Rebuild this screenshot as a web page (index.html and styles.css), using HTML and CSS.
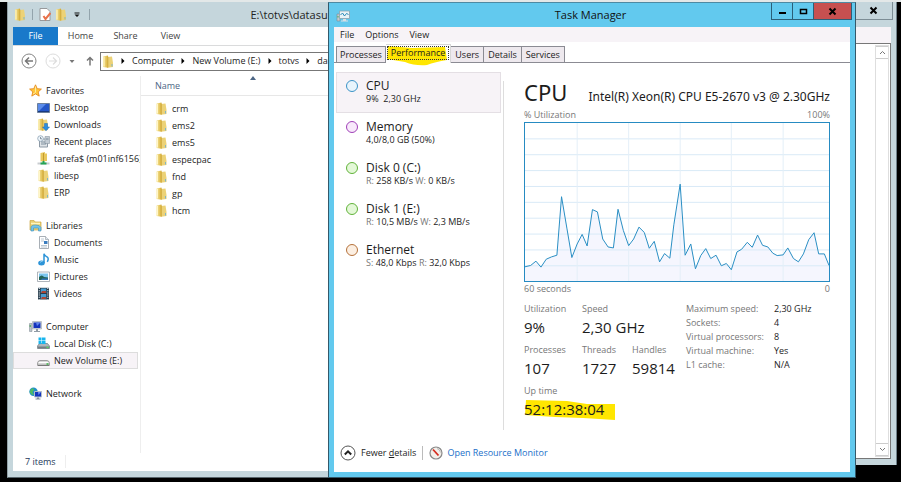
FILE: index.html
```
<!DOCTYPE html>
<html lang="en">
<head>
<meta charset="utf-8">
<title>Task Manager</title>
<link rel="stylesheet" href="styles.css">
</head>
<body>
<svg class="defs" aria-hidden="true">
  <defs>
    <linearGradient id="gold" x1="0" x2="1"><stop offset="0" stop-color="#f7e69a"/><stop offset="1" stop-color="#d9b23c"/></linearGradient>
    <symbol id="folder" viewBox="0 0 12 13">
      <path d="M1 1.500 6 .5V12.700L1 12z" fill="url(#gold)"/>
      <path d="M5.500 2 10 1.500 11 8V12L5.500 12.700z" fill="#ecd277"/>
      <path d="M5.800 1.500V12.500" stroke="#c9a02f" stroke-width=".8"/>
      <path d="M2 2v9.500" stroke="#fff6c8" stroke-width="1"/>
      <path d="M10 9v2.500" stroke="#7fb5c9" stroke-width="1"/>
    </symbol>
    <symbol id="star" viewBox="0 0 13 13"><path d="M6.500.8 8.200 4.700l4.200.4-3.200 2.800 1 4.200-3.700-2.200-3.700 2.200 1-4.200L.6 5.100l4.200-.4z" fill="#ffc63a" stroke="#e58a1f" stroke-width=".9"/><path d="M6.500 2.500v6l-2.500 1.500" fill="none" stroke="#ffeb9a"/></symbol>
    <symbol id="desktop" viewBox="0 0 13 13"><path d="M.5 2.500h12v9H.5z" fill="#2456c8" stroke="#6b7f9b"/><path d="M1 3h8L2 10H1z" fill="#5b8cea"/><path d="M1 10.500h11" stroke="#193a80"/></symbol>
    <symbol id="downloads" viewBox="0 0 13 13"><use href="#folder" width="12" height="13"/><path d="M7.500 5.500h3v3.500h2L9 12.800 5.500 9h2z" fill="#2a8de0" stroke="#1a68b5" stroke-width=".5"/></symbol>
    <symbol id="recent" viewBox="0 0 13 13"><path d="M2.500 4h8v8h-8z" fill="#dfe4e8" stroke="#8c99a5"/><path d="M8 1.500h4.500v7H8z" fill="#c3ccd4" stroke="#8b97a3" stroke-width=".6"/><circle cx="3.500" cy="3.500" r="2.800" fill="#eef5fa" stroke="#8ea3b5" stroke-width=".8"/><path d="M3.500 2v1.800H5M4 7h4M4 9h5M9 4h2.500" stroke="#66788a" stroke-width=".8" fill="none"/></symbol>
    <symbol id="share" viewBox="0 0 13 13"><path d="M3.500 1 8 0v1.500h2V9l-6.500.5z" fill="#e9c85c"/><path d="M6.500 1v8" stroke="#c29a2d"/><path d="M.5 11.500h12" stroke="#c8ccd0" stroke-width="2"/><path d="M6.500 9v2M3.500 11.500h6" stroke="#25a454" stroke-width="2"/></symbol>
    <symbol id="libraries" viewBox="0 0 13 13"><path d="M1 1.500h4l1 1.500h6v8H1z" fill="#ead073" stroke="#cba643" stroke-width=".7"/><path d="M2 4.500h9" stroke="#fff5bd" stroke-width="1.500"/><path d="M2 12V8.500Q2 6 6.500 6T12 8.500V12H9.500V9h-5v3z" fill="#73c3e9" stroke="#3d91bd" stroke-width=".6"/></symbol>
    <symbol id="document" viewBox="0 0 13 13"><path d="M2.500.5h6l3 3v9h-9z" fill="#fff" stroke="#929ba3" stroke-width=".8"/><path d="M4 3h3M4 5h3M4 9.500h6M4 11h6" stroke="#a9bac8" stroke-width=".8"/><path d="M7 5h3.500v3H7z" fill="#3a7dbf"/><path d="M8.500.5v3h3" fill="#dfe7ed" stroke="#929ba3" stroke-width=".6"/></symbol>
    <symbol id="music" viewBox="0 0 13 13"><ellipse cx="4.500" cy="10" rx="3.300" ry="2.500" fill="#2d94d8"/><path d="M7 10V.8q1 2.500 3.500 3.500 1.500 1.500-.2 4.500" fill="none" stroke="#2d94d8" stroke-width="1.500"/><path d="M3 9.500q1-1.500 2.500-1" stroke="#a4ddfa" fill="none" stroke-width=".8"/></symbol>
    <symbol id="picture" viewBox="0 0 13 13"><path d="M.5 2h12v9.500H.5z" fill="#fff" stroke="#9aa2a9" stroke-width=".8"/><path d="M2 3.500h9V10H2z" fill="#7bc5ee"/><path d="M2 7q3-3 5 0l4 .5V10H2z" fill="#226457"/><path d="M5 8.500h6V10H4z" fill="#3475b8"/></symbol>
    <symbol id="video" viewBox="0 0 13 13"><path d="M1 .8h11v11.700H1z" fill="#273c4b"/><path d="M3.800 1.500h5.500v4.500H3.800zM3.800 7h5.500v5H3.800z" fill="#469bd0"/><path d="M5 4h4v2H4zM5 10h4v2H4z" fill="#a94635"/><path d="M2.300 1v11.500M10.800 1v11.500" stroke="#dbe4ea" stroke-width="1.200" stroke-dasharray="1 1.200"/></symbol>
    <symbol id="computer" viewBox="0 0 13 13"><path d="M.5 3.500h2.500v8H.5z" fill="#bcc4ca" stroke="#79858e" stroke-width=".5"/><path d="M1.200 5v2" stroke="#3aac45"/><path d="M3.500 1.500h9V9h-9z" fill="#d1d7dc" stroke="#939da5" stroke-width=".5"/><path d="M4.500 2.500h7V8h-7z" fill="#1534bd"/><path d="M7 2.500h4.500L8 6z" fill="#6184e9"/><path d="M7 9h2v2h2v1H5v-1h2z" fill="#929ca6"/></symbol>
    <symbol id="disk" viewBox="0 0 13 13"><path d="M.5 9 2.500 6.500h8l2 2.500v2.500H.5z" fill="#aeb5bb" stroke="#6b747b" stroke-width=".7"/><path d="M1 9.500h11v1.800H1z" fill="#747d84"/><path d="M9.500 10.300h2" stroke="#50e655" stroke-width="1.200"/></symbol>
    <symbol id="windisk" viewBox="0 0 13 13"><use href="#disk" width="13" height="13"/><path d="M1.500.5h3v3h-3zM5 .5h3.500v3H5zM1.500 4h3v3h-3zM5 4h3.500v3H5z" fill="#18b5ee"/></symbol>
    <symbol id="volume" viewBox="0 0 13 13"><path d="M.6 9Q1 6.500 3 6.500h7q2 0 2.400 2.500v2.500H.6z" fill="#d8d8d8" stroke="#7c7c7c" stroke-width=".7"/><path d="M1.500 8.500h10" stroke="#fff"/><path d="M1 11.300h11" stroke="#707070"/><path d="M9.500 10h2" stroke="#3bb347" stroke-width="1.500"/></symbol>
    <symbol id="network" viewBox="0 0 13 13"><circle cx="4.500" cy="4.800" r="4.200" fill="#218fca"/><path d="M2 2q3-2 3 1L3.500 5 5 8 2.500 7.500.5 5z" fill="#4ebc62"/><path d="M5.500 4.500h7V10h-7z" fill="#1535bd" stroke="#b3bdc8"/><path d="M9 5h3L9.500 8z" fill="#6c8def"/><path d="M8 10.500h2v1h1.500v1h-5v-1H8z" fill="#828f9a"/></symbol>
  </defs>
</svg>

<main class="screen">
  <section class="win back-win" aria-label="Background window">
    <header class="bar"><button class="cap cap-plain" aria-label="Close window"><svg viewBox="0 0 9 9"><path d="M1.500 1.500l6 6M7.500 1.500l-6 6"/></svg></button></header>
    <div class="back-menu"></div>
    <div class="back-body">
      <div class="scroll">
        <button aria-label="Scroll up"><svg viewBox="0 0 7 5"><path d="M1 4l2.500-2.500L6 4"/></svg></button>
        <button aria-label="Scroll down"><svg viewBox="0 0 7 5"><path d="M1 1l2.500 2.500L6 1"/></svg></button>
      </div>
    </div>
  </section>

  <section class="win explorer" aria-label="File Explorer">
    <header class="bar">
      <svg class="i"><use href="#folder"/></svg><span class="rule"></span>
      <svg class="i" viewBox="0 0 12 13"><path d="M1 .5h7l3 3v9H1z" fill="#fff" stroke="#97999b"/><path d="M4.500 8l2 3 5-6" fill="none" stroke="#e8714a" stroke-width="2"/></svg>
      <svg class="i"><use href="#folder"/></svg>
      <svg class="tiny" viewBox="0 0 6 6"><path d="M.5.500h5v1h-5zM.5 2.500h5L3 5z" fill="#111"/></svg><span class="rule"></span>
      <h1 class="path-title">E:\totvs\datasul</h1>
    </header>
    <div class="client">
      <nav class="ribbon"><button class="file">File</button><button>Home</button><button>Share</button><button>View</button></nav>
      <div class="address">
        <button class="icon-btn" aria-label="Back"><svg viewBox="0 0 16 16"><circle cx="8" cy="8" r="7" fill="#fff" stroke="#858585"/><path d="M12 8H4.500M8 4.500 4.500 8 8 11.500" fill="none" stroke="#777" stroke-width="1.500"/></svg></button>
        <button class="icon-btn fwd" aria-label="Forward"><svg viewBox="0 0 16 16"><circle cx="8" cy="8" r="7" fill="#fff" stroke="#ddd"/><path d="M4 8h7.500M8 4.500 11.500 8 8 11.500" fill="none" stroke="#ddd" stroke-width="1.200"/></svg></button>
        <svg class="tiny" viewBox="0 0 6 6"><path d="M.5 2h5L3 5z" fill="#777"/></svg>
        <svg class="up" viewBox="0 0 8 10"><path d="M4 9.500V1.500M1 4.500l3-3 3 3" fill="none" stroke="#777" stroke-width="1.500"/></svg>
        <div class="crumbs">
          <svg class="i"><use href="#folder"/></svg>
          <svg class="tri" viewBox="0 0 4 6"><path d="M.5 0 3.500 3l-3 3z"/></svg><span>Computer</span>
          <svg class="tri" viewBox="0 0 4 6"><path d="M.5 0 3.500 3l-3 3z"/></svg><span>New Volume (E:)</span>
          <svg class="tri" viewBox="0 0 4 6"><path d="M.5 0 3.500 3l-3 3z"/></svg><span>totvs</span>
          <svg class="tri" viewBox="0 0 4 6"><path d="M.5 0 3.500 3l-3 3z"/></svg><span>datasul</span>
        </div>
      </div>
      <div class="split">
        <nav class="tree">
          <ul><li class="root"><svg><use href="#star"/></svg>Favorites</li><li><svg><use href="#desktop"/></svg>Desktop</li><li><svg><use href="#downloads"/></svg>Downloads</li><li><svg><use href="#recent"/></svg>Recent places</li><li><svg><use href="#share"/></svg>tarefa$ (m01inf6156)</li><li><svg><use href="#folder"/></svg>libesp</li><li><svg><use href="#folder"/></svg>ERP</li></ul>
          <ul><li class="root"><svg><use href="#libraries"/></svg>Libraries</li><li><svg><use href="#document"/></svg>Documents</li><li><svg><use href="#music"/></svg>Music</li><li><svg><use href="#picture"/></svg>Pictures</li><li><svg><use href="#video"/></svg>Videos</li></ul>
          <ul><li class="root"><svg><use href="#computer"/></svg>Computer</li><li><svg><use href="#windisk"/></svg>Local Disk (C:)</li><li class="on"><svg><use href="#volume"/></svg>New Volume (E:)</li></ul>
          <ul><li class="root"><svg><use href="#network"/></svg>Network</li></ul>
        </nav>
        <div class="files">
          <div class="col-head"><span>Name</span><svg class="sort" viewBox="0 0 6 4"><path d="M3 0l3 4H0z" fill="#4d6685"/></svg></div>
          <ul><li><svg><use href="#folder"/></svg>crm</li><li><svg><use href="#folder"/></svg>ems2</li><li><svg><use href="#folder"/></svg>ems5</li><li><svg><use href="#folder"/></svg>especpac</li><li><svg><use href="#folder"/></svg>fnd</li><li><svg><use href="#folder"/></svg>gp</li><li><svg><use href="#folder"/></svg>hcm</li></ul>
        </div>
      </div>
      <footer class="status"><span>7 items</span></footer>
    </div>
  </section>

  <section class="win taskman" aria-label="Task Manager">
    <header class="bar">
      <svg class="app" viewBox="0 0 14 12"><path d="M1 4h3v7H1z" fill="#c4cbd0" stroke="#7a8b95" stroke-width=".6"/><path d="M3.500 1h10v7.500h-10z" fill="#e9f2f6" stroke="#8aa2ae" stroke-width=".8"/><path d="M4.500 5l2-2 2 3 2-2.500 2 1" fill="none" stroke="#2989b8"/><path d="M7 9h3v1.500h2v1H5v-1h2z" fill="#d9dfe3"/><path d="M2 6v1.500" stroke="#41a851"/></svg>
      <h2>Task Manager</h2>
      <div class="caps">
        <button class="cap" aria-label="Minimize"><svg viewBox="0 0 9 9"><path d="M1 6h7"/></svg></button><button class="cap" aria-label="Maximize"><svg viewBox="0 0 9 9"><path d="M1.500 2.500h6v4h-6z" class="thin"/></svg></button><button class="cap cap-close" aria-label="Close"><svg viewBox="0 0 9 9"><path d="M1.500 1.500l6 6M7.500 1.500l-6 6"/></svg></button>
      </div>
    </header>
    <div class="client">
      <nav class="menu"><button>File</button><button>Options</button><button>View</button></nav>
      <div class="tabs" role="tablist">
        <button role="tab">Processes</button><button role="tab" class="sel" aria-selected="true"><svg class="mark" viewBox="0 0 60 20" preserveAspectRatio="none"><path d="M1 0 25 2 58 1 60 14Q48 16 40 19 28 20 18 16L0 13z"/></svg><span>Performance</span></button><button role="tab">Users</button><button role="tab">Details</button><button role="tab">Services</button>
      </div>
      <div class="perf">
        <ul class="res">
          <li class="cpu on"><i></i><div><b>CPU</b><p>9%&nbsp; 2,30 GHz</p></div></li>
          <li class="mem"><i></i><div><b>Memory</b><p>4,0/8,0 GB (50%)</p></div></li>
          <li class="dsk"><i></i><div><b>Disk 0 (C:)</b><p><em>R:</em> 258 KB/s <em>W:</em> 0 KB/s</p></div></li>
          <li class="dsk"><i></i><div><b>Disk 1 (E:)</b><p><em>R:</em> 10,5 MB/s <em>W:</em> 2,3 MB/s</p></div></li>
          <li class="eth"><i></i><div><b>Ethernet</b><p><em>S:</em> 48,0 Kbps <em>R:</em> 32,0 Kbps</p></div></li>
        </ul>
        <div class="detail">
          <div class="head"><h3>CPU</h3><span>Intel(R) Xeon(R) CPU E5-2670 v3 @ 2.30GHz</span></div>
          <div class="axis"><span>% Utilization</span><span>100%</span></div>
          <svg class="graph" viewBox="0 0 915 478" preserveAspectRatio="none" role="img" aria-label="CPU utilization over 60 seconds">
            <path class="area" d="M0 478V435L17 431 33 418 48 436 64 412 80 405 96 400 110 223 126 318 141 407 157 366 172 337 187 372 203 262 218 269 234 351 250 375 266 378 280 261 296 325 312 371 327 351 343 315 359 331 374 379 389 358 405 420 420 395 436 409 448 308 467 185 482 400 499 366 513 441 529 401 544 380 559 410 575 400 591 432 606 425 621 444 638 390 652 382 669 361 684 376 700 339 715 370 731 375 746 394 759 401 777 399 791 378 808 410 823 420 838 396 854 353 870 332 884 396 901 396 915 431V478z"/>
            <path class="grid" d="M0 48H915M0 96H915M0 144H915M0 192H915M0 240H915M0 288H915M0 336H915M0 384H915M0 432H915"/>
            <path class="grid vert" d="M157 0V478M312 0V478M467 0V478M621 0V478M777 0V478"/>
            <path class="line" d="M0 435 17 431 33 418 48 436 64 412 80 405 96 400 110 223 126 318 141 407 157 366 172 337 187 372 203 262 218 269 234 351 250 375 266 378 280 261 296 325 312 371 327 351 343 315 359 331 374 379 389 358 405 420 420 395 436 409 448 308 467 185 482 400 499 366 513 441 529 401 544 380 559 410 575 400 591 432 606 425 621 444 638 390 652 382 669 361 684 376 700 339 715 370 731 375 746 394 759 401 777 399 791 378 808 410 823 420 838 396 854 353 870 332 884 396 901 396 915 431"/>
          </svg>
          <div class="axis axis-x"><span>60 seconds</span><span>0</span></div>
          <div class="stats">
            <div class="big">
              <dl class="two"><div><dt>Utilization</dt><dd>9%</dd></div><div><dt>Speed</dt><dd>2,30 GHz</dd></div></dl>
              <dl class="three"><div><dt>Processes</dt><dd>107</dd></div><div><dt>Threads</dt><dd>1727</dd></div><div><dt>Handles</dt><dd>59814</dd></div></dl>
              <dl><div><dt>Up time</dt><dd class="uptime"><svg class="mark" viewBox="0 0 90 20" preserveAspectRatio="none"><path d="M1 0 42 1 62 4H90V20L58 18 30 17 0 15z"/></svg><span>52:12:38:04</span></dd></div></dl>
            </div>
            <table class="facts">
              <tr><th>Maximum speed:</th><td>2,30 GHz</td></tr><tr><th>Sockets:</th><td>4</td></tr><tr><th>Virtual processors:</th><td>8</td></tr><tr><th>Virtual machine:</th><td>Yes</td></tr><tr><th>L1 cache:</th><td>N/A</td></tr>
            </table>
          </div>
        </div>
      </div>
      <footer class="foot">
        <button class="fewer"><svg viewBox="0 0 16 16"><circle cx="8" cy="8" r="7" fill="#fff" stroke="#555"/><path d="M4.800 9.500 8 6.300l3.200 3.200" fill="none" stroke="#222" stroke-width="2"/></svg><span>Fewer <u>d</u>etails</span></button>
        <a href="#monitor"><svg viewBox="0 0 14 14"><circle cx="7" cy="7" r="6" fill="#f3efea" stroke="#888" stroke-width="1.200"/><path d="M4 3.500l5.500 6" stroke="#d52b1e" stroke-width="1.800"/><path d="M8 2.500q3 1 3.500 4" fill="none" stroke="#bbb"/></svg>Open Resource Monitor</a>
      </footer>
    </div>
  </section>
</main>
</body>
</html>
```
FILE: styles.css
```
* { box-sizing: border-box; }
body { margin: 0; font: 9px/12px "Open Sans", "Noto Sans", sans-serif; color: #1c1c1c; background: #000; }
ul, dl, dd, h1, h2, h3, p { margin: 0; padding: 0; list-style: none; font-weight: 400; }
button { margin: 0; padding: 0; border: 0; background: none; font: inherit; color: inherit; }
.defs { position: absolute; width: 0; height: 0; }
.screen { position: relative; min-height: 100vh; overflow: hidden; border-top: 2px solid #e3e8e8; }

/* Windows on the desktop */
.win { position: absolute; top: 0; display: flex; flex-direction: column; white-space: nowrap; }
.bar { display: flex; align-items: center; height: 25px; flex: none; }
.client { flex: 1; min-height: 0; display: flex; flex-direction: column; background: #fff; }
.cap { width: 21px; height: 17px; display: grid; place-items: center; border: 1px solid #2b5f78; border-top: 0; border-left: 0; }
.cap svg { width: 9px; height: 9px; fill: none; stroke: #000; stroke-width: 2; }

.back-win { left: 60%; right: 4px; bottom: 17px; background: #c5d6dc; border-right: 1px solid #6f8089; padding: 0 5px 6px 0; }
.back-win .bar { justify-content: flex-end; align-items: flex-start; margin-right: -2px; }
.cap-plain { width: 38px; height: 18px; border-color: #7c8d95; }
.back-menu { height: 16px; background: #f7f3f7; }
.back-body { flex: 1; display: flex; justify-content: flex-end; background: #fff; border: 1px solid #777; padding: 1px; }
.scroll { width: 14px; display: flex; flex-direction: column; justify-content: space-between; border: 1px solid #dedede; }
.scroll button { height: 13px; border: 1px solid #ccc; border-width: 1px 0; display: grid; place-items: center; }
.scroll svg { width: 7px; height: 5px; fill: none; stroke: #777; }

.explorer { left: 7px; width: 50%; bottom: 4px; padding: 0 6px 6px 5px; background: #c5d6dc; border-left: 1px solid #93a2a8; border-bottom: 1px solid #58656b; }
.explorer .bar { gap: 4px; padding-left: 1px; }
.i { width: 12px; height: 13px; flex: none; }
.tiny { width: 6px; height: 6px; flex: none; margin: 0 3px; }
.rule { width: 1px; height: 11px; background: #93a4ac; margin: 0 2px; }
.path-title { font-size: 11px; margin-left: auto; width: 201px; color: #222; }
.ribbon { display: flex; height: 19px; border-bottom: 1px solid #dadbdc; color: #444; }
.ribbon button { width: 45px; }
.ribbon .file { background: #1979ca; color: #fff; }
.address { display: flex; align-items: center; height: 30px; padding-left: 8px; flex: none; }
.icon-btn svg, .icon-btn { display: block; width: 16px; height: 16px; }
.icon-btn.fwd { margin-left: 8px; }
.address .tiny { margin-left: 8px; margin-right: 11px; }
.up { width: 8px; height: 10px; margin-right: 6px; }
.crumbs { flex: 1; display: flex; align-items: center; gap: 7px; height: 19px; border: 1px solid #777; padding-left: 1px; }
.tri { width: 4px; height: 6px; }
.split { flex: 1; display: flex; min-height: 0; }
.tree { width: 128px; flex: none; display: flex; flex-direction: column; gap: 16px; padding-top: 6px; border-right: 1px solid #eee; overflow: hidden; }
.tree li, .files li { display: flex; align-items: center; gap: 4px; height: 17px; padding-left: 24px; }
.tree .root { padding-left: 16px; }
.tree li.on { background: #f7f3f7; border: 1px solid #ddd; padding-left: 23px; margin-right: 2px; }
.tree svg, .files li svg { width: 13px; height: 13px; flex: none; }
.files { flex: 1; }
.files ul { padding-top: 4px; }
.files li { padding-left: 14px; }
.col-head { display: flex; height: 20px; align-items: center; gap: 70px; padding-left: 14px; color: #4d6685; border-bottom: 1px solid #e7e7e7; }
.sort { width: 6px; height: 4px; align-self: flex-start; }
.status { height: 18px; padding: 3px 0 0 12px; color: #1e395b; }
.status span { border-right: 1px solid #eee; padding-right: 9px; }

.taskman { left: 328px; right: 45px; bottom: 4px; background: #62c9ee; border: 1px solid #34596a; border-top-color: #4d8aa3; padding: 0 5px 5px; }
.taskman .bar { height: 24px; align-items: flex-start; justify-content: space-between; }
.app { width: 14px; height: 12px; margin: 7px 0 0 2px; }
.taskman h2 { font-size: 11px; line-height: 24px; margin-left: 60px; color: #111; }
.caps { display: flex; border-left: 1px solid #2b5f78; margin-right: -2px; }
.cap-close { width: 38px; background: #c75050; }
.thin { stroke-width: 1.500; }
.menu { display: flex; gap: 11px; height: 15px; padding-left: 6px; background: #f7f3f7; flex: none; }
.tabs { display: flex; align-items: flex-end; height: 21px; padding-left: 2px; border-bottom: 1px solid #8b8b93; flex: none; }
.tabs button { height: 16px; padding: 0 4px; background: #eee9ee; border: 1px solid #8b8b93; border-bottom: 0; border-left-width: 0; }
.tabs button:first-child { border-left-width: 1px; padding: 0 3px; }
.tabs .sel { position: relative; height: 19px; margin-bottom: -1px; background: #fff; border-color: #d7d7d7; padding: 0 1px 2px; }
.tabs .sel span { position: relative; display: block; padding: 0 3px; border: 1px dotted #333; }
.mark { position: absolute; left: 1px; top: 1px; width: 60px; height: 20px; fill: #ffe600; }
.perf { flex: 1; display: flex; min-height: 0; padding: 9px 20px 11px 2px; }
.res { width: 165px; flex: none; }
.res li { display: flex; gap: 8px; height: 41px; padding: 5px 0 0 9px; border: 1px solid transparent; }
.res li.on { background: #f7f3f7; border-color: #e4dfe4; }
.res i { width: 12px; height: 12px; margin-top: 2px; border-radius: 50%; border: 1px solid #3b93c7; background: #e8f4fc; }
.res .mem i { border-color: #a041b8; background: #f8e9fb; }
.res .dsk i { border-color: #62b33b; background: #e4f8d8; }
.res .eth i { border-color: #b5713a; background: #fcefe2; }
.res b { display: block; font-weight: 400; font-size: 12px; line-height: 15px; }
.res em { font-style: normal; color: #777; }
.detail { flex: 1; min-width: 0; margin: 9px 0 0 2px; padding-left: 20px; border-left: 1px solid #ddd; }
.head { display: flex; justify-content: space-between; align-items: baseline; height: 28px; font-family: "Noto Sans", "Open Sans", sans-serif; }
.head h3 { font-size: 22px; line-height: 22px; }
.head span { font-size: 12px; }
.axis { display: flex; justify-content: space-between; color: #777; height: 13px; }
.axis-x { margin-top: 1px; }
.graph { display: block; width: 100%; height: 160px; border: 1px solid #268bc2; }
.graph path { fill: none; stroke-width: 1; vector-effect: non-scaling-stroke; }
.graph .area { fill: #f5f6fe; }
.graph .grid { stroke: #d9eaf7; }
.graph .vert { stroke: #e4eff8; }
.graph .line { stroke: #2a8fc4; }
.stats { display: flex; justify-content: space-between; margin-top: 7px; }
.big { display: flex; flex-direction: column; width: 162px; }
.big dl { display: flex; height: 41px; }
.two div, .three div { width: 58px; flex: none; }
.three div:nth-child(2) { width: 50px; }
.big dt { color: #777; }
.big dd { font-size: 15px; line-height: 24px; }
.uptime { position: relative; }
.uptime span { position: relative; }
.uptime .mark { left: 1px; width: 90px; top: 3px; }
.facts { border-spacing: 0; flex: 1; height: 70px; line-height: 14px; margin-top: -1px; }
.facts th, .facts td { padding: 0; font-weight: 400; text-align: left; }
.facts th { width: 88px; color: #777; }
.foot { display: flex; align-items: center; height: 31px; padding: 0 6px 7px; flex: none; }
.foot button, .foot a { display: flex; align-items: center; gap: 5px; }
.foot svg { width: 16px; height: 16px; }
.foot a { margin-left: 6px; padding-left: 6px; border-left: 1px solid #bbb; color: #1b70c9; text-decoration: none; gap: 4px; }
.foot a svg { width: 14px; height: 14px; }
```
